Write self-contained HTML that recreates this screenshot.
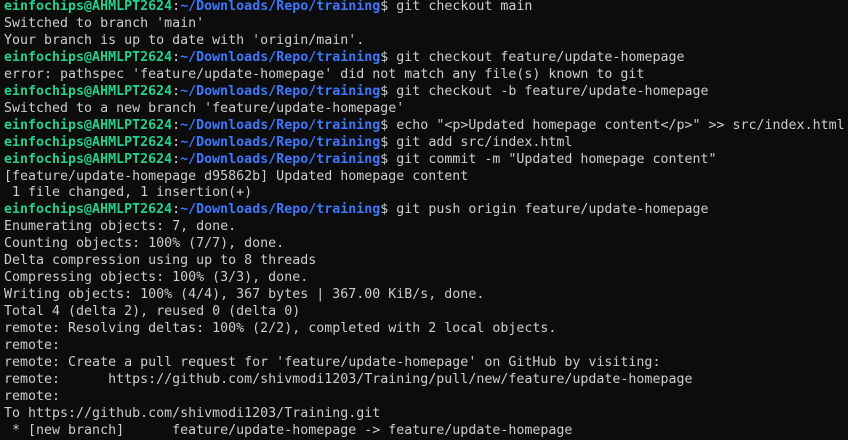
<!DOCTYPE html>
<html><head><style>
html,body{margin:0;padding:0;background:#0c0c0c;width:848px;height:439px;overflow:hidden}
pre{margin:0;position:absolute;left:4px;top:-1px;font-family:"DejaVu Sans Mono","Liberation Mono",monospace;font-size:13.3px;line-height:16.95px;color:#cccccc;white-space:pre}
.g{font-weight:bold;color:#23d18b}
.b{color:#3b78ff;font-weight:bold}
</style></head><body><pre><span class="g">einfochips@AHMLPT2624</span>:<span class="b">~/Downloads/Repo/training</span>$ git checkout main
Switched to branch 'main'
Your branch is up to date with 'origin/main'.
<span class="g">einfochips@AHMLPT2624</span>:<span class="b">~/Downloads/Repo/training</span>$ git checkout feature/update-homepage
error: pathspec 'feature/update-homepage' did not match any file(s) known to git
<span class="g">einfochips@AHMLPT2624</span>:<span class="b">~/Downloads/Repo/training</span>$ git checkout -b feature/update-homepage
Switched to a new branch 'feature/update-homepage'
<span class="g">einfochips@AHMLPT2624</span>:<span class="b">~/Downloads/Repo/training</span>$ echo "&lt;p&gt;Updated homepage content&lt;/p&gt;" &gt;&gt; src/index.html
<span class="g">einfochips@AHMLPT2624</span>:<span class="b">~/Downloads/Repo/training</span>$ git add src/index.html
<span class="g">einfochips@AHMLPT2624</span>:<span class="b">~/Downloads/Repo/training</span>$ git commit -m "Updated homepage content"
[feature/update-homepage d95862b] Updated homepage content
 1 file changed, 1 insertion(+)
<span class="g">einfochips@AHMLPT2624</span>:<span class="b">~/Downloads/Repo/training</span>$ git push origin feature/update-homepage
Enumerating objects: 7, done.
Counting objects: 100% (7/7), done.
Delta compression using up to 8 threads
Compressing objects: 100% (3/3), done.
Writing objects: 100% (4/4), 367 bytes | 367.00 KiB/s, done.
Total 4 (delta 2), reused 0 (delta 0)
remote: Resolving deltas: 100% (2/2), completed with 2 local objects.
remote:
remote: Create a pull request for 'feature/update-homepage' on GitHub by visiting:
remote:      https://github.com/shivmodi1203/Training/pull/new/feature/update-homepage
remote:
To https://github.com/shivmodi1203/Training.git
 * [new branch]      feature/update-homepage -&gt; feature/update-homepage</pre></body></html>
